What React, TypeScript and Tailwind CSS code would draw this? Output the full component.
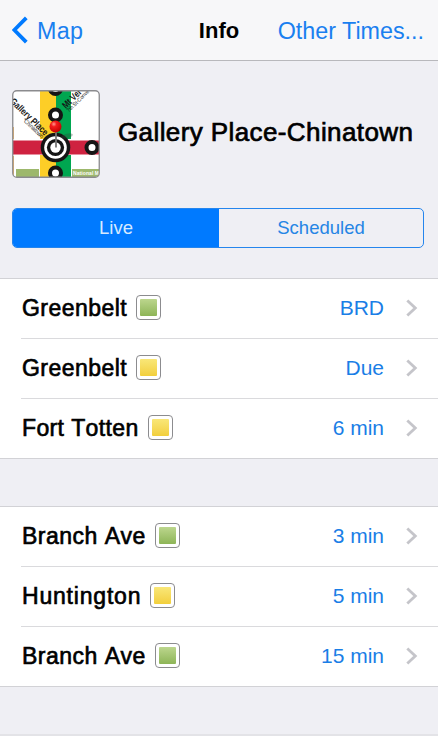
import { clsx } from 'clsx'

type LineColor = 'green' | 'yellow'

interface Train {
    destination: string
    line: LineColor
    time: string
    tracking: string
}

const PLATFORMS: Train[][] = [
    [
        { destination: 'Greenbelt', line: 'green', time: 'BRD', tracking: 'tracking-[0.45px]' },
        { destination: 'Greenbelt', line: 'yellow', time: 'Due', tracking: 'tracking-[0.45px]' },
        { destination: 'Fort Totten', line: 'yellow', time: '6 min', tracking: 'tracking-[0.37px]' },
    ],
    [
        { destination: 'Branch Ave', line: 'green', time: '3 min', tracking: 'tracking-[0.5px]' },
        { destination: 'Huntington', line: 'yellow', time: '5 min', tracking: 'tracking-[0.8px]' },
        { destination: 'Branch Ave', line: 'green', time: '15 min', tracking: 'tracking-[0.5px]' },
    ],
]

export default function App() {
    return (
        <div
            className="flex h-[750px] w-[438px] flex-col overflow-hidden bg-[#efeff4] text-black"
            style={{ fontFamily: '"Liberation Sans", Arial, sans-serif' }}
        >
            <NavBar />
            <StationHeader />
            <ModeSwitch />
            <div className="mt-[30px] flex flex-col gap-[47px]">
                {PLATFORMS.map((trains, i) => (
                    <TrainList key={i} trains={trains} />
                ))}
                <div className="h-4 border-t-2 border-[#e3e3e7] bg-white" />
            </div>
        </div>
    )
}

const NavBar = () => (
    <nav className="grid h-[61px] shrink-0 grid-cols-[1fr_auto_1fr] items-center border-b border-[#b8b8bc] bg-[#f7f7f9] text-[23.3px] text-[#1a7ff0]">
        <button className="flex items-center gap-[9px] pl-3">
            <svg width="16" height="28" viewBox="0 0 16 28" fill="none" stroke="#007aff" strokeWidth="3.8">
                <path d="M14.3 1.8 2.3 14l12 12.2" />
            </svg>
            <span className="pt-0.5 tracking-[0.3px]">Map</span>
        </button>
        <h1 className="pt-px text-[22px] font-bold text-black">Info</h1>
        <button className="pt-0.5 pr-[14px] text-right whitespace-nowrap">Other Times...</button>
    </nav>
)

const StationHeader = () => (
    <header className="flex shrink-0 items-center gap-[18px] pt-[29px] pl-3">
        <MapThumbnail />
        <h2 className="pb-[3px] text-[26px] tracking-[0.4px] whitespace-nowrap [-webkit-text-stroke:0.7px_black]">
            Gallery Place-Chinatown
        </h2>
    </header>
)

const MapThumbnail = () => (
    <svg className="block shrink-0" width="88" height="88" viewBox="0 0 88 88">
        <defs>
            <clipPath id="thumb">
                <rect x="1" y="1" width="86" height="86" rx="4" />
            </clipPath>
            <radialGradient id="pin" cx="0.36" cy="0.3" r="0.75">
                <stop offset="0" stopColor="#ff9a90" />
                <stop offset="0.3" stopColor="#f51c1c" />
                <stop offset="1" stopColor="#bd0000" />
            </radialGradient>
        </defs>
        <g clipPath="url(#thumb)">
            <rect width="88" height="88" fill="#fff" />
            <rect x="28" width="16" height="88" fill="#fdce27" />
            <rect x="44" width="15" height="88" fill="#00a650" />
            <rect y="49" width="88" height="16" fill="#fff" />
            <rect y="50.5" width="88" height="14" fill="#cf2240" />
            <rect x="4" y="79" width="23" height="9" fill="#9db86c" />
            <rect x="60" y="79" width="28" height="9" fill="#9db86c" />
            <path d="M1.5 37v12M1.5 66v22" stroke="#e8b26c" strokeWidth="1" />
            <g fill="#fff" stroke="#151515" strokeWidth="4">
                <circle cx="43.5" cy="-1.5" r="5.5" />
                <circle cx="43.5" cy="25" r="5.5" />
                <circle cx="43.5" cy="83" r="5.5" />
                <circle cx="80" cy="57.5" r="5.5" />
            </g>
            <circle cx="43.5" cy="57.5" r="14.8" fill="#151515" />
            <circle cx="43.5" cy="57.5" r="11.3" fill="#fff" />
            <circle cx="43.5" cy="57.5" r="8.6" fill="#151515" />
            <circle cx="43.5" cy="57.5" r="5.2" fill="#fff" />
            <g fill="#151515">
                <text
                    transform="translate(-2.5 12) rotate(44)"
                    fontSize="9.5"
                    fontWeight="700"
                    textLength="49"
                    lengthAdjust="spacingAndGlyphs"
                >
                    Gallery Place
                </text>
                <text
                    transform="translate(11.5 31.5) rotate(44)"
                    fontSize="6"
                    textLength="25"
                    lengthAdjust="spacingAndGlyphs"
                >
                    Chinatown
                </text>
                <text
                    transform="translate(54 19) rotate(-45)"
                    fontSize="9.5"
                    fontWeight="700"
                    textLength="23"
                    lengthAdjust="spacingAndGlyphs"
                >
                    Mt Ver
                </text>
                <text
                    transform="translate(57 22.5) rotate(-45)"
                    fontSize="5.5"
                    textLength="29"
                    lengthAdjust="spacingAndGlyphs"
                >
                    7th St-Conve
                </text>
            </g>
            <text x="61" y="85" fontSize="5" fontWeight="700" fill="#fff" textLength="26">
                National M
            </text>
            <ellipse cx="55" cy="46" rx="6" ry="2.2" fill="#30483c" opacity="0.35" transform="rotate(-15 55 46)" />
            <path d="M44 40v17.5" stroke="#777" strokeWidth="1.8" />
            <circle cx="43.5" cy="36.5" r="6" fill="url(#pin)" />
        </g>
        <rect x="0.75" y="0.75" width="86.5" height="86.5" rx="4" fill="none" stroke="#8b8b8e" strokeWidth="1.3" />
    </svg>
)

const ModeSwitch = () => (
    <div className="mt-[30px] mr-[14px] ml-3 grid h-10 shrink-0 grid-cols-[206px_1fr] overflow-hidden rounded-[5px] border border-[#2585ed] text-[18.5px]">
        <button className="bg-[#007aff] pb-px text-[#d6eaff]">Live</button>
        <button className="pb-px text-[#2585e5]">Scheduled</button>
    </div>
)

const TrainList = ({ trains }: { trains: Train[] }) => (
    <ul className="border-y border-[#d2d2d6] bg-white">
        {trains.map((train, i) => (
            <li key={i} className="flex h-[60px] items-stretch pl-[21px] last:h-[59px]">
                <div
                    className={clsx(
                        'flex flex-1 items-center pr-5 pb-[2px]',
                        i < trains.length - 1 && 'border-b border-[#dadadd]'
                    )}
                >
                    <span
                        className={clsx(
                            'pt-0.5 pl-px text-[23px] whitespace-nowrap [font-kerning:none] [-webkit-text-stroke:0.65px_black]',
                            train.tracking
                        )}
                    >
                        {train.destination}
                    </span>
                    <LineBadge line={train.line} />
                    <span className="ml-auto text-[21px] text-[#1a7ee6]">{train.time}</span>
                    <svg className="mt-px ml-[22px]" width="12" height="18" viewBox="0 0 12 18" fill="none">
                        <path d="m1.3 1.5 8 7.5-8 7.5" stroke="#c5c5ca" strokeWidth="2.8" />
                    </svg>
                </div>
            </li>
        ))}
    </ul>
)

const LineBadge = ({ line }: { line: LineColor }) => (
    <span className="mb-px ml-[9px] flex size-[25px] shrink-0 items-center justify-center rounded-[4px] border border-[#8c8c8f] bg-white">
        <span
            className={clsx(
                'size-[17px] rounded-[1px] bg-linear-to-b',
                line === 'green' ? 'from-[#bcd68d] to-[#8eb557]' : 'from-[#f9e777] to-[#f2cf3b]'
            )}
        />
    </span>
)
